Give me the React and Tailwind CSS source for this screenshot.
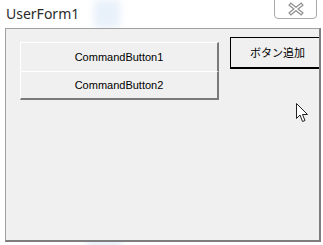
import React from "react";

const CommandButton = ({ label, last }) => (
  <div
    className={`flex items-center justify-center h-[29px] bg-[#f0f0f0] border-t border-l border-t-white border-l-white border-r-2 border-r-[#7a7a7a] text-[11px] text-black ${
      last ? "border-b-2 border-b-[#7a7a7a]" : ""
    }`}
    style={{ fontFamily: '"Liberation Sans", Arial, sans-serif' }}
  >
    {label}
  </div>
);

export default function App() {
  return (
    <div className="relative w-[323px] h-[245px] bg-white overflow-hidden">
      {/* desktop showing through behind the form */}
      <div className="absolute left-[94px] top-0 w-[26px] h-[28px] bg-[#e8f0fa] blur-[4px]" />
      <div className="absolute left-[86px] top-[241px] w-[36px] h-[5px] bg-[#dde8f7] blur-[3px]" />

      {/* title bar */}
      <div className="relative flex h-[28px] items-start">
        <span
          className="ml-[6px] mt-[5px] text-[14px] leading-[18px] text-[#2b2b2b]"
          style={{ fontFamily: '"Noto Sans", "Open Sans", sans-serif' }}
        >
          UserForm1
        </span>
        <div className="ml-auto mr-[6px] -mt-[1px] flex h-[20px] w-[43px] items-center justify-center rounded-b-[4px] border border-[#a9a9a9] bg-white">
          <svg width="18" height="14" viewBox="0 0 18 14">
            <path d="M4 3 L14 11 M14 3 L4 11" stroke="#8f8f8f" strokeWidth="4" strokeLinecap="square" />
            <path d="M4 3 L14 11 M14 3 L4 11" stroke="#ffffff" strokeWidth="1.6" strokeLinecap="square" />
          </svg>
        </div>
      </div>

      {/* client area */}
      <div className="relative ml-[5px] w-[316px] h-[214px] border-l border-t border-[#a0a0a0] border-r-2 border-b-2 border-r-[#7d7d7d] border-b-[#7d7d7d] bg-[#f0f0f0] overflow-hidden">
        <div className="flex">
          <div className="ml-[14px] mt-[13px] w-[199px] shrink-0 flex flex-col">
            <CommandButton label="CommandButton1" />
            <CommandButton label="CommandButton2" last />
          </div>
          <div
            className="ml-[11px] mt-[8px] w-[100px] h-[32px] shrink-0 flex items-center border border-black border-b-2 bg-[#f0f0f0] text-[11px] text-black"
            style={{ fontFamily: '"Noto Sans CJK JP", "Noto Sans", sans-serif' }}
          >
            <span className="ml-[19px]">ボタン追加</span>
          </div>
        </div>

        {/* mouse pointer */}
        <svg
          className="absolute left-[290px] top-[74px]"
          width="13"
          height="20"
          viewBox="0 0 13 20"
        >
          <path
            d="M0.5 0.5 L0.5 15.5 L4 12 L6.5 18.5 L9 17.5 L6.5 11.5 L11.5 11.5 Z"
            fill="white"
            stroke="#222"
            strokeWidth="1"
            strokeLinejoin="round"
          />
        </svg>
      </div>
    </div>
  );
}
